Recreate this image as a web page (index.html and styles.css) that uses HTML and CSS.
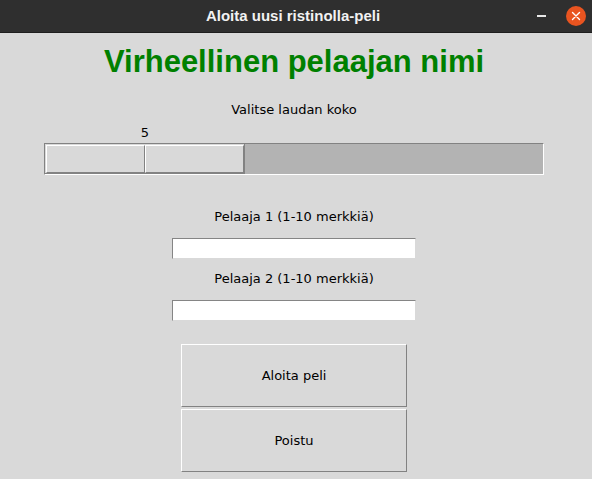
FILE: index.html
```html
<!DOCTYPE html>
<html lang="fi">
<head>
<meta charset="utf-8">
<title>Aloita uusi ristinolla-peli</title>
<link rel="stylesheet" href="styles.css">
</head>
<body>
<div class="window">
  <header class="titlebar">
    <div class="title">Aloita uusi ristinolla-peli</div>
    <div class="controls">
      <span class="minimize"></span>
      <span class="close">
        <svg width="20" height="20" viewBox="0 0 20 20"><path d="M6.5 6.5 L13.5 13.5 M13.5 6.5 L6.5 13.5" stroke="#fff" stroke-width="1.4" stroke-linecap="round"/></svg>
      </span>
    </div>
  </header>
  <main class="content">
    <h1 class="heading">Virheellinen pelaajan nimi</h1>
    <div class="label label-size">Valitse laudan koko</div>
    <div class="scale-wrap">
      <div class="scale-value">5</div>
      <div class="scale">
        <div class="slider">
          <div class="slider-half"></div>
          <div class="slider-half"></div>
        </div>
      </div>
    </div>
    <div class="label label-p1">Pelaaja 1 (1-10 merkkiä)</div>
    <div class="entry entry-p1"></div>
    <div class="label label-p2">Pelaaja 2 (1-10 merkkiä)</div>
    <div class="entry entry-p2"></div>
    <div class="button button-start">Aloita peli</div>
    <div class="button button-quit">Poistu</div>
  </main>
</div>
</body>
</html>
```

FILE: styles.css
```css
* { box-sizing: border-box; }
html, body {
  margin: 0;
  padding: 0;
  width: 592px;
  height: 479px;
  overflow: hidden;
  background: #d9d9d9;
}
body {
  font-family: "DejaVu Sans", sans-serif;
  font-size: 13px;
  color: #000;
}
.window {
  width: 592px;
  height: 479px;
  display: flex;
  flex-direction: column;
}
.titlebar {
  height: 33px;
  flex: none;
  background: #2f2f2f;
  border-bottom: 1px solid #1e1e1e;
  display: grid;
  grid-template-columns: 1fr auto 1fr;
  align-items: center;
  padding: 0 6px 0 0;
  position: relative;
}
.title {
  grid-column: 2;
  color: #f2f2f2;
  font-family: "Liberation Sans", sans-serif;
  font-weight: bold;
  font-size: 15px;
  line-height: 20px;
  padding-bottom: 1px;
}
.controls {
  grid-column: 3;
  justify-self: end;
  display: flex;
  align-items: center;
  gap: 20px;
}
.minimize {
  display: block;
  width: 9px;
  height: 1.5px;
  background: #e8e8e8;
}
.close {
  display: flex;
  width: 20px;
  height: 20px;
  border-radius: 50%;
  background: #e95420;
}
.content {
  width: 588px;
  display: flex;
  flex-direction: column;
  align-items: center;
}
.heading {
  margin: 11px 0 0;
  font-family: "Liberation Sans", Arial, sans-serif;
  font-weight: bold;
  font-size: 31px;
  line-height: 36px;
  color: #008000;
}
.label {
  line-height: 16px;
  white-space: nowrap;
}
.label-size { margin-top: 22px; }
.scale-wrap {
  width: 500px;
  display: flex;
  flex-direction: column;
}
.scale-value {
  margin: 7px 0 0 1px;
  width: 200px;
  text-align: center;
  line-height: 16px;
}
.scale {
  margin-top: 2px;
  width: 500px;
  height: 32px;
  background: #b3b3b3;
  border-top: 1px solid #828282;
  border-left: 1px solid #828282;
  border-bottom: 1px solid #ffffff;
  border-right: 1px solid #ffffff;
  display: flex;
}
.slider {
  width: 200px;
  height: 30px;
  display: flex;
  background: #d9d9d9;
  padding: 1px 0 0 1px;
  border-right: 1px solid #828282;
  border-bottom: 1px solid #828282;
}
.slider-half {
  flex: 1;
  border-top: 1px solid #ffffff;
  border-left: 1px solid #ffffff;
  border-right: 1px solid #828282;
  border-bottom: 1px solid #828282;
}
.label-p1 { margin-top: 34px; }
.label-p2 { margin-top: 12px; }
.entry {
  width: 244px;
  height: 21px;
  margin-top: 13px;
  background: #ffffff;
  border-top: 1px solid #858585;
  border-left: 1px solid #858585;
  border-right: 1px solid #d9d9d9;
  border-bottom: 1px solid #d9d9d9;
}
.button {
  width: 226px;
  height: 63px;
  display: flex;
  align-items: center;
  justify-content: center;
  background: #d9d9d9;
  border-top: 1px solid #ffffff;
  border-left: 1px solid #ffffff;
  border-right: 1px solid #828282;
  border-bottom: 1px solid #828282;
}
.button-start { margin-top: 23px; }
.button-quit { margin-top: 2px; }
```
